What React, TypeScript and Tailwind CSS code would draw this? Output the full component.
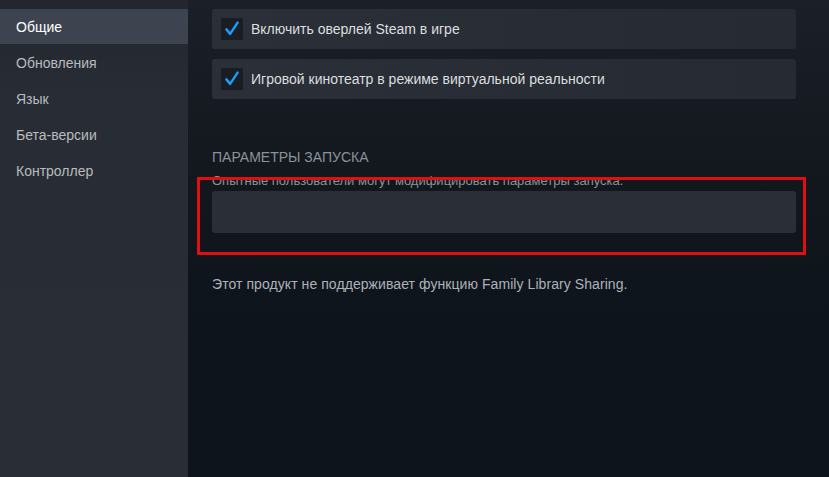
const navItems = ['Общие', 'Обновления', 'Язык', 'Бета-версии', 'Контроллер'];

function CheckRow({ label }: { label: string }) {
  return (
    <div className="flex h-10 items-center gap-2 rounded-[3px] bg-[linear-gradient(90deg,#2b2f38_0%,#262a32_100%)] pl-[9px]">
      <div className="flex h-[22px] w-[22px] items-center justify-center rounded-[2px] bg-[#1a1d23]">
        <svg viewBox="0 0 24 24" className="h-[18px] w-[18px]" fill="none">
          <path d="M4.5 12.5l5 6L19.5 3.5" stroke="#1a9fff" strokeWidth={3.2} strokeLinecap="round" strokeLinejoin="round" />
        </svg>
      </div>
      <span className="text-[14px] text-[#dcdedf]">{label}</span>
    </div>
  );
}

export default function App() {
  return (
    <div
      className="relative flex h-[477px] w-[829px] overflow-hidden"
      style={{ fontFamily: '"Liberation Sans", Arial, sans-serif' }}
    >
      <aside className="flex w-[188px] shrink-0 flex-col bg-[linear-gradient(180deg,#23262e_0%,#282c34_20%,#292d36_100%)] pt-[9px]">
        {navItems.map((item, i) => (
          <div
            key={item}
            className={
              i === 0
                ? 'flex h-[35px] items-center bg-[#3d4450] pl-4 pt-[2px] text-[14px] text-white'
                : 'flex h-9 items-center pl-4 pt-[3px] text-[14px] text-[#b8bcbf]'
            }
          >
            {item}
          </div>
        ))}
      </aside>

      <main className="flex flex-1 flex-col bg-[linear-gradient(180deg,#1b1f27_0%,#12171e_40%,#0e141b_70%,#0e141b_100%)] pl-6 pr-[33px] pt-[9px]">
        <div className="flex flex-col gap-[10px]">
          <CheckRow label="Включить оверлей Steam в игре" />
          <CheckRow label="Игровой кинотеатр в режиме виртуальной реальности" />
        </div>

        <div className="mt-[48px] text-[14px] uppercase text-[#8b929a]">Параметры запуска</div>
        <div className="mt-[5px] text-[13px] leading-[15px] text-[#8b929a]">
          Опытные пользователи могут модифицировать параметры запуска.
        </div>
        <div className="mt-[3px] h-[42px] rounded-[3px] bg-[#2a2e37]" />

        <div className="mt-[41px] text-[14px] tracking-[0.07px] text-[#acb2b8]">
          Этот продукт не поддерживает функцию Family Library Sharing.
        </div>
      </main>

      <div className="pointer-events-none absolute left-[197px] top-[177px] h-[78px] w-[609px] border-[3px] border-[#e01010]" />
    </div>
  );
}
